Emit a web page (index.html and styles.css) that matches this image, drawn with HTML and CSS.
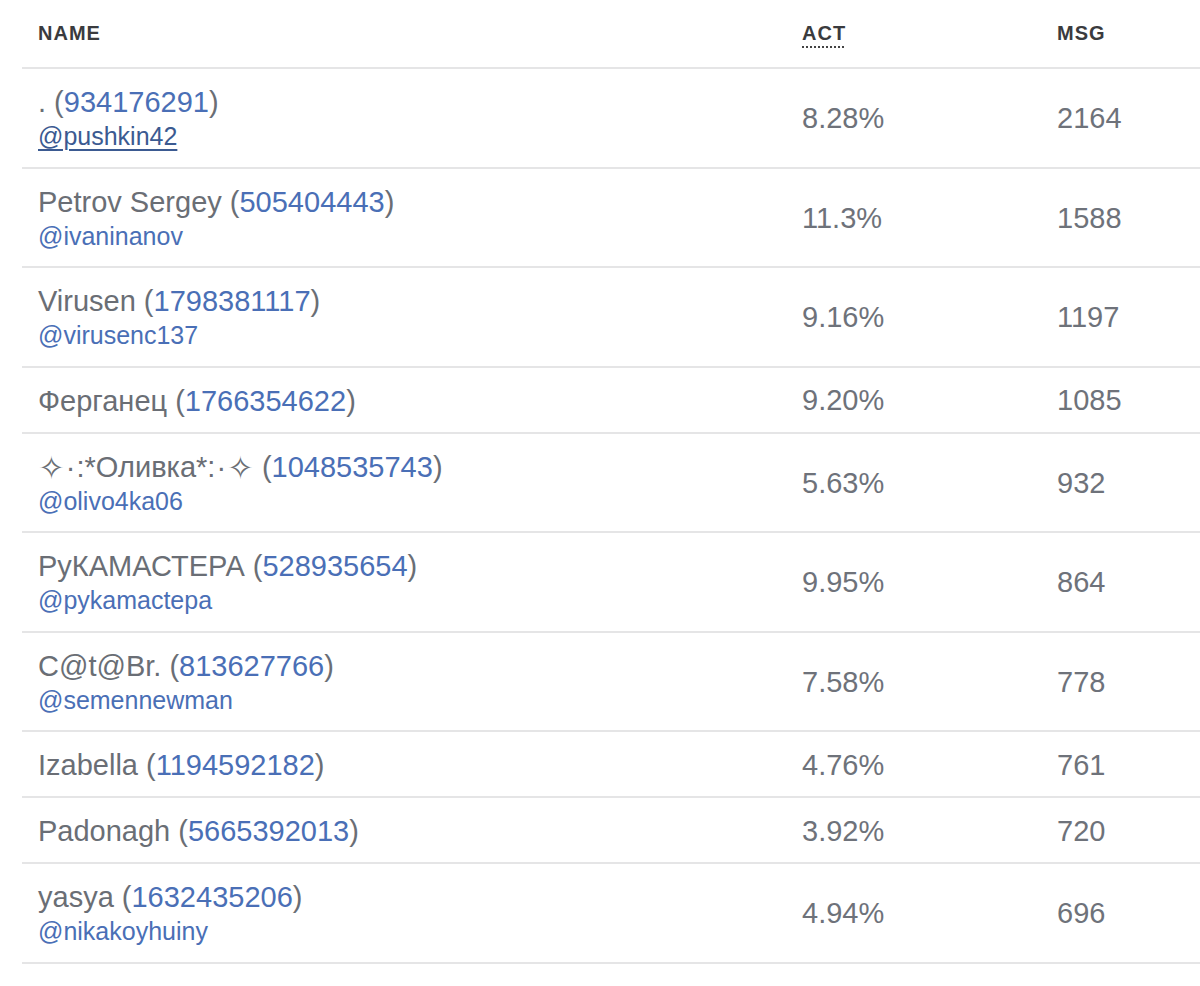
FILE: index.html
```html
<!DOCTYPE html>
<html lang="ru">
<head>
<meta charset="utf-8">
<title>Members</title>
<link rel="stylesheet" href="styles.css">
</head>
<body>
<div class="wrap">
<table class="stats">
  <colgroup>
    <col class="c-name">
    <col class="c-act">
    <col class="c-msg">
  </colgroup>
  <thead>
    <tr>
      <th>NAME</th>
      <th><abbr class="hint" title="Activity">ACT</abbr></th>
      <th>MSG</th>
    </tr>
  </thead>
  <tbody>
    <tr>
      <td class="name"><div class="n">. (<a class="id">934176291</a>)</div><a class="handle active">@pushkin42</a></td>
      <td class="val">8.28%</td>
      <td class="val">2164</td>
    </tr>
    <tr>
      <td class="name"><div class="n">Petrov Sergey (<a class="id">505404443</a>)</div><a class="handle">@ivaninanov</a></td>
      <td class="val">11.3%</td>
      <td class="val">1588</td>
    </tr>
    <tr>
      <td class="name"><div class="n">Virusen (<a class="id">1798381117</a>)</div><a class="handle">@virusenc137</a></td>
      <td class="val">9.16%</td>
      <td class="val">1197</td>
    </tr>
    <tr>
      <td class="name"><div class="n">Ферганец (<a class="id">1766354622</a>)</div></td>
      <td class="val">9.20%</td>
      <td class="val">1085</td>
    </tr>
    <tr>
      <td class="name"><div class="n"><span class="spark">✧</span><span class="dot">·</span>:*Оливка*:<span class="dot">·</span><span class="spark">✧</span> (<a class="id">1048535743</a>)</div><a class="handle">@olivo4ka06</a></td>
      <td class="val">5.63%</td>
      <td class="val">932</td>
    </tr>
    <tr>
      <td class="name"><div class="n">РуКАМАСТЕРА (<a class="id">528935654</a>)</div><a class="handle">@pykamactepa</a></td>
      <td class="val">9.95%</td>
      <td class="val">864</td>
    </tr>
    <tr>
      <td class="name"><div class="n">C@t@Br. (<a class="id">813627766</a>)</div><a class="handle">@semennewman</a></td>
      <td class="val">7.58%</td>
      <td class="val">778</td>
    </tr>
    <tr>
      <td class="name"><div class="n">Izabella (<a class="id">1194592182</a>)</div></td>
      <td class="val">4.76%</td>
      <td class="val">761</td>
    </tr>
    <tr>
      <td class="name"><div class="n">Padonagh (<a class="id">5665392013</a>)</div></td>
      <td class="val">3.92%</td>
      <td class="val">720</td>
    </tr>
    <tr>
      <td class="name"><div class="n">yasya (<a class="id">1632435206</a>)</div><a class="handle">@nikakoyhuiny</a></td>
      <td class="val">4.94%</td>
      <td class="val">696</td>
    </tr>
  </tbody>
</table>
</div>
</body>
</html>
```

FILE: styles.css
```css
html, body {
  margin: 0;
  padding: 0;
  background: #ffffff;
}

body {
  font-family: "Liberation Sans", Arial, sans-serif;
  overflow: hidden;
}

.wrap {
  padding-left: 22px;
  width: 1200px;
  box-sizing: border-box;
}

.stats {
  border-collapse: collapse;
  width: 1200px;
  table-layout: fixed;
}

.c-name { width: 764px; }
.c-act { width: 255px; }
.c-msg { width: 181px; }

.stats th {
  text-align: left;
  font-size: 20px;
  font-weight: 700;
  letter-spacing: 1px;
  color: #3a3b3e;
  line-height: 24px;
  padding: 21px 16px 22px 16px;
  border-bottom: 2px solid #e5e5e6;
}

.hint {
  text-decoration: underline dotted #444;
  text-decoration-thickness: 2px;
  text-underline-offset: 6px;
}

.stats td {
  padding: 15px 16px 13px 16px;
  border-bottom: 2px solid #e5e5e6;
  vertical-align: middle;
}

.name .n {
  font-size: 29px;
  line-height: 36px;
  color: #6a6e75;
  white-space: nowrap;
}

.spark {
  font-family: "DejaVu Sans", sans-serif;
  font-size: 32px;
  line-height: 0;
  vertical-align: -2px;
}

.dot {
  padding: 0 1px;
}

.id {
  color: #4a6fb6;
}

.handle {
  display: block;
  font-size: 25px;
  line-height: 33.5px;
  color: #4a6fb6;
  white-space: nowrap;
}

.handle.active {
  display: inline-block;
  color: #3b5a91;
  text-decoration: underline;
  text-decoration-thickness: 2px;
  text-underline-offset: 4px;
}

.val {
  font-size: 29px;
  color: #6e727a;
  white-space: nowrap;
}
```
